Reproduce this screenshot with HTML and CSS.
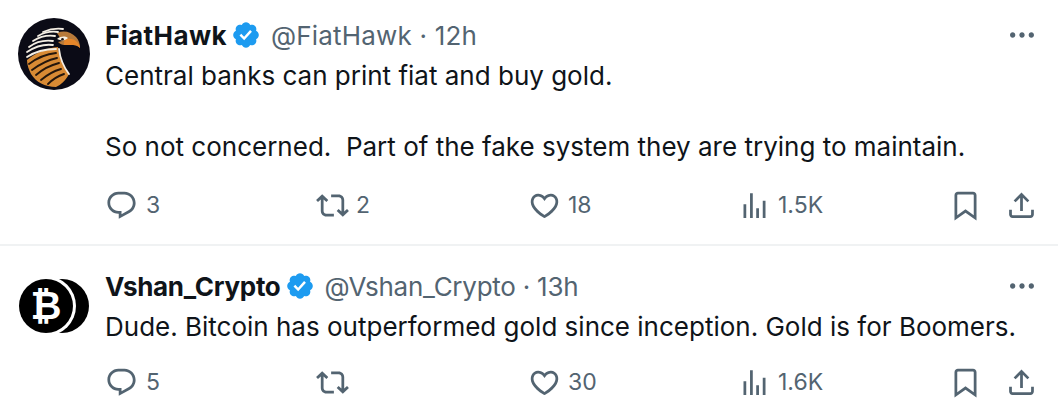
FILE: index.html
```html
<!DOCTYPE html>
<html lang="en">
<head>
<meta charset="utf-8">
<title>Replies</title>
<link rel="stylesheet" href="styles.css">
</head>
<body>
<svg class="defs" width="0" height="0" aria-hidden="true">
  <symbol id="i-reply" viewBox="0 0 24 24"><path d="M1.751 10c0-4.42 3.584-8 8.005-8h4.366c4.49 0 8.129 3.64 8.129 8.13 0 2.96-1.607 5.68-4.196 7.11l-8.054 4.46v-3.69h-.067c-4.49.1-8.183-3.51-8.183-8.01zm8.005-6c-3.317 0-6.005 2.69-6.005 6 0 3.37 2.77 6.08 6.138 6.01l.351-.01h1.761v2.3l5.087-2.81c1.951-1.08 3.163-3.13 3.163-5.36 0-3.39-2.744-6.13-6.129-6.13H9.756z"/></symbol>
  <symbol id="i-retweet" viewBox="0 0 24 24"><path d="M4.5 3.88l4.432 4.14-1.364 1.46L5.5 7.55V16c0 1.1.896 2 2 2H13v2H7.5c-2.209 0-4-1.79-4-4V7.55L1.432 9.48.068 8.02 4.5 3.88zM16.5 6H11V4h5.5c2.209 0 4 1.79 4 4v8.45l2.068-1.93 1.364 1.46-4.432 4.14-4.432-4.14 1.364-1.46 2.068 1.93V8c0-1.1-.896-2-2-2z"/></symbol>
  <symbol id="i-like" viewBox="0 0 24 24"><path d="M16.697 5.5c-1.222-.06-2.679.51-3.89 2.16l-.805 1.09-.806-1.09C9.984 6.01 8.526 5.44 7.304 5.5c-1.243.07-2.349.78-2.91 1.91-.552 1.12-.633 2.78.479 4.82 1.074 1.97 3.257 4.27 7.129 6.61 3.87-2.34 6.052-4.64 7.126-6.61 1.111-2.04 1.03-3.7.477-4.82-.561-1.13-1.666-1.84-2.908-1.91zm4.187 7.69c-1.351 2.48-4.001 5.12-8.379 7.67l-.503.3-.504-.3c-4.379-2.55-7.029-5.19-8.382-7.67-1.36-2.5-1.41-4.86-.514-6.67.887-1.79 2.647-2.91 4.601-3.01 1.651-.09 3.368.56 4.798 2.01 1.429-1.45 3.146-2.1 4.796-2.01 1.954.1 3.714 1.22 4.601 3.01.896 1.81.846 4.17-.514 6.67z"/></symbol>
  <symbol id="i-views" viewBox="0 0 24 24"><path d="M8.75 21V3h2v18h-2zM18 21V8.5h2V21h-2zM4 21l.004-10h2L6 21H4zm9.248 0v-7h2v7h-2z"/></symbol>
  <symbol id="i-bookmark" viewBox="0 0 24 24"><path d="M4 4.5C4 3.12 5.119 2 6.5 2h11C18.881 2 20 3.12 20 4.5v18.44l-8-5.71-8 5.71V4.5zM6.5 4c-.276 0-.5.22-.5.5v14.56l6-4.29 6 4.29V4.5c0-.28-.224-.5-.5-.5h-11z"/></symbol>
  <symbol id="i-share" viewBox="0 0 24 24"><path d="M12 2.59l5.7 5.7-1.41 1.42L13 6.41V16h-2V6.41l-3.3 3.3-1.41-1.42L12 2.59zM21 15l-.02 3.51c0 1.38-1.12 2.49-2.5 2.49H5.5C4.11 21 3 19.88 3 18.5V15h2v3.5c0 .28.22.5.5.5h12.98c.28 0 .5-.22.5-.5L19 15h2z"/></symbol>
  <symbol id="i-verified" viewBox="0 0 24 24"><path d="M22.25 12c0-1.43-.88-2.67-2.19-3.34.46-1.39.2-2.9-.81-3.91s-2.52-1.27-3.91-.81c-.66-1.31-1.91-2.19-3.34-2.19s-2.67.88-3.33 2.19c-1.4-.46-2.91-.2-3.92.81s-1.26 2.52-.8 3.91c-1.31.67-2.2 1.91-2.2 3.34s.89 2.67 2.2 3.34c-.46 1.39-.21 2.9.8 3.91s2.52 1.26 3.91.81c.67 1.31 1.91 2.19 3.34 2.19s2.68-.88 3.34-2.19c1.39.45 2.9.2 3.91-.81s1.27-2.52.81-3.91c1.31-.67 2.19-1.91 2.19-3.34zm-11.71 4.2L6.8 12.46l1.41-1.42 2.26 2.26 4.8-5.23 1.47 1.36-6.2 6.77z"/></symbol>
  <symbol id="i-more" viewBox="0 0 24 24"><path d="M3 12c0-1.1.9-2 2-2s2 .9 2 2-.9 2-2 2-2-.9-2-2zm9 2c1.1 0 2-.9 2-2s-.9-2-2-2-2 .9-2 2 .9 2 2 2zm7 0c1.1 0 2-.9 2-2s-.9-2-2-2-2 .9-2 2 .9 2 2 2z"/></symbol>
</svg>

<article class="tweet tweet-first">
  <div class="avatar-col">
    <svg class="avatar-hawk" viewBox="0 0 72 72" aria-label="FiatHawk avatar">
      <circle cx="36" cy="36" r="36" fill="#0b0b16"/>
      <path d="M22 15c8-5 17-7 25-4 5 2 9 4 11 8 3 3 4 7 4 11-2-2-4-3-7-3h-8c-2 2-2 5-2 7 1 8 5 15 9 21-3 6-8 11-13 13-11 0-20-5-26-13C9 47 7 40 8 34c2-8 8-14 7-19z" fill="#0b0b16"/>
      <path d="M9 42c10-8 20-12 31-13 1 9 5 18 11 27-3 6-8 11-13 13-11 0-20-5-25-13-2-4-4-9-4-14z" fill="#d88a34"/>
      <path d="M39 15c7-3 14-1 19 4 3 3 4 7 4 11-2-2-4-3-7-3h-9c-2 0-4-1-6-3l4-1c-2-3-3-5-5-8z" fill="#b87a3a"/>
      <path d="M47 21c5-1 10 0 12 3 2 2 3 4 3 6-2-2-4-3-7-3h-9c0-2 0-4 1-6z" fill="#e6862a"/>
      <path d="M39 21c4-3 8-3 11-1-3 3-7 3-11 1z" fill="#f6efe2"/>
      <circle cx="44.5" cy="21.3" r="1.3" fill="#221510"/>
      <g fill="none" stroke="#f4eee4" stroke-width="1.8" stroke-linecap="round">
        <path d="M25 14c7-3 13-4 20-3"/>
        <path d="M20 18c7-4 13-5 20-4"/>
        <path d="M15 23c8-5 15-6 22-5"/>
        <path d="M11 29c8-6 16-7 24-6"/>
        <path d="M9 34c9-6 18-8 26-7"/>
        <path d="M9 39c9-6 19-8 29-8"/>
        <path d="M41 31c1 9 4 17 10 25"/>
      </g>
      <g fill="none" stroke="#24160c" stroke-width="1.9" stroke-linecap="round">
        <path d="M11 46c8-6 17-10 27-11"/>
        <path d="M14 52c8-6 16-10 25-12"/>
        <path d="M18 57c7-6 15-10 23-12"/>
        <path d="M23 62c7-6 13-9 20-11"/>
        <path d="M30 66c5-5 10-8 16-10"/>
      </g>
    </svg>
  </div>
  <div class="body">
    <header class="head">
      <span class="name">FiatHawk</span>
      <svg class="verified"><use href="#i-verified"/></svg>
      <span class="handle">@FiatHawk · 12h</span>
      <svg class="more"><use href="#i-more"/></svg>
    </header>
    <p class="text">Central banks can print fiat and buy gold.<br><br>So not concerned.&nbsp; Part of the fake system they are trying to maintain.</p>
    <footer class="actions">
      <span class="act act-reply"><svg class="ico"><use href="#i-reply"/></svg>3</span>
      <span class="act act-rt"><svg class="ico"><use href="#i-retweet"/></svg>2</span>
      <span class="act act-like"><svg class="ico"><use href="#i-like"/></svg>18</span>
      <span class="act act-views"><svg class="ico"><use href="#i-views"/></svg>1.5K</span>
      <span class="act act-mark"><svg class="ico"><use href="#i-bookmark"/></svg></span>
      <svg class="ico"><use href="#i-share"/></svg>
    </footer>
  </div>
</article>

<article class="tweet tweet-second">
  <div class="avatar-col">
    <div class="avatar-coin" aria-label="Vshan_Crypto avatar">
      <span class="coin-front">₿</span>
    </div>
  </div>
  <div class="body">
    <header class="head">
      <span class="name">Vshan_Crypto</span>
      <svg class="verified"><use href="#i-verified"/></svg>
      <span class="handle">@Vshan_Crypto · 13h</span>
      <svg class="more"><use href="#i-more"/></svg>
    </header>
    <p class="text">Dude. Bitcoin has outperformed gold since inception. Gold is for Boomers.</p>
    <footer class="actions actions-second">
      <span class="act act-reply"><svg class="ico"><use href="#i-reply"/></svg>5</span>
      <span class="act act-rt"><svg class="ico"><use href="#i-retweet"/></svg></span>
      <span class="act act-like"><svg class="ico"><use href="#i-like"/></svg>30</span>
      <span class="act act-views"><svg class="ico"><use href="#i-views"/></svg>1.6K</span>
      <span class="act act-mark"><svg class="ico"><use href="#i-bookmark"/></svg></span>
      <svg class="ico"><use href="#i-share"/></svg>
    </footer>
  </div>
</article>
</body>
</html>
```
FILE: styles.css
```css
* { box-sizing: border-box; }
html, body { margin: 0; padding: 0; background: #fff; }
body {
  width: 1058px;
  height: 416px;
  overflow: hidden;
  font-family: Inter, "Liberation Sans", sans-serif;
  color: #0f1419;
}
.defs { position: absolute; }
.tweet { display: flex; }
.tweet-first { height: 246px; padding: 18px 0 0 18px; border-bottom: 2px solid #f0f2f3; }
.tweet-second { height: 170px; padding: 23px 0 0 19px; }
.avatar-col { width: 87px; flex: none; }
.tweet-second .avatar-col { width: 86px; }
.avatar-hawk { display: block; width: 72px; height: 72px; }
.avatar-coin {
  position: relative;
  width: 70px;
  height: 54px;
  margin-top: 10px;
}
.avatar-coin::before {
  content: "";
  position: absolute;
  left: 16px;
  top: 0;
  width: 54px;
  height: 54px;
  border-radius: 50%;
  background: #000;
}
.coin-front {
  position: absolute;
  left: 0;
  top: 0;
  width: 54px;
  height: 54px;
  display: flex;
  align-items: center;
  justify-content: center;
  border-radius: 50%;
  background: #000;
  box-shadow: 0 0 0 3px #fff;
  color: #fff;
  font: 700 38px/1 "DejaVu Serif", "DejaVu Sans", sans-serif;
}
.body { flex: 1; min-width: 0; }
.head { display: flex; align-items: center; height: 34px; }
.name { font-size: 26px; font-weight: 700; }
.tweet-first .name { letter-spacing: 0.4px; }
.tweet-second .name { letter-spacing: -0.3px; }
.verified { width: 30px; height: 30px; margin-left: 4px; fill: #1d9bf0; flex: none; }
.handle { margin-left: 10px; font-size: 26px; color: #536471; }
.tweet-first .handle { letter-spacing: 0.2px; }
.tweet-second .handle { letter-spacing: -0.25px; }
.more { width: 32px; height: 32px; margin-left: auto; margin-right: 20px; fill: #536471; flex: none; }
.text { margin: 6px 0 0; font-size: 26px; line-height: 35.5px; }
.actions { display: flex; align-items: center; height: 33px; margin-top: 24px; font-size: 23px; color: #536471; }
.actions-second { margin-top: 21px; }
.act { display: flex; align-items: center; gap: 7px; }
.act-reply { width: 211px; gap: 8px; }
.act-rt { width: 212px; }
.act-like { width: 210px; }
.act-views { width: 211px; gap: 7px; }
.act-mark { width: 56px; }
.ico { width: 33px; height: 33px; fill: #536471; flex: none; }
```
